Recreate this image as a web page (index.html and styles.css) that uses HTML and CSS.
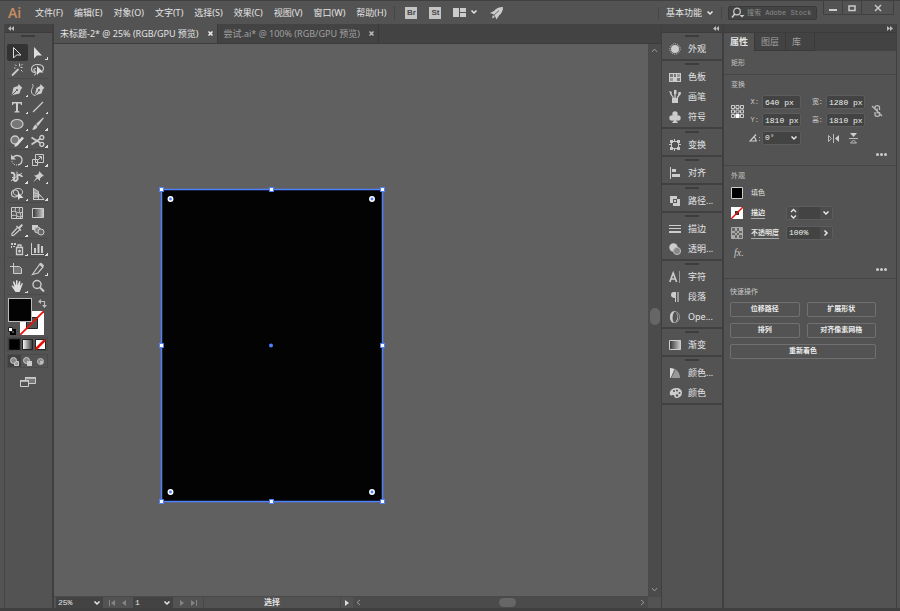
FILE: index.html
```html
<!DOCTYPE html>
<html lang="zh-CN">
<head>
<meta charset="utf-8">
<title>未标题-2</title>
<link rel="stylesheet" href="styles.css">
</head>
<body>
<svg width="0" height="0" class="defs" aria-hidden="true">
  <defs>
    <linearGradient id="grad"><stop offset="0" stop-color="#333"/><stop offset="1" stop-color="#ccc"/></linearGradient>
    <linearGradient id="gradw"><stop offset="0" stop-color="#fff"/><stop offset="1" stop-color="#333"/></linearGradient>
    <symbol id="chev" viewBox="0 0 8 8"><path d="M1.500 2.500 4 5l2.500-2.500" fill="none" stroke="#e8e8e8" stroke-width="1.500"/></symbol>
  </defs>
</svg>

<header class="menubar">
  <span class="logo">Ai</span>
  <nav class="menus">
    <button>文件(F)</button><button>编辑(E)</button><button>对象(O)</button><button>文字(T)</button><button>选择(S)</button><button>效果(C)</button><button>视图(V)</button><button>窗口(W)</button><button>帮助(H)</button>
  </nav>
  <div class="apps">
    <button class="app">Br</button>
    <button class="app">St</button>
    <button class="arrange" aria-label="排列文档"><svg width="13" height="9"><path fill="#ccc" d="M0 0h6v9H0zM7 0h6v4H7zM7 5h6v4H7z"/></svg><svg width="8" height="8"><use href="#chev"/></svg></button>
    <button aria-label="GPU 性能"><svg width="14" height="14" viewBox="0 0 14 14"><path fill="#ccc" d="M13 1C9 1 6 2.500 4 5L0 7l3 1 1.500 1.500L5.500 11l1 2.500L9 9.500C11.500 7.500 13 5 13 1z"/><path fill="#ccc" d="M3 9l2 2-3 1.500z"/><path stroke="#535353" stroke-width=".8" d="M3.500 9.500 9 4.500"/></svg></button>
  </div>
  <button class="workspace">基本功能 <svg width="8" height="8"><use href="#chev"/></svg></button>
  <label class="search"><svg width="14" height="12" viewBox="0 0 14 12"><circle cx="6" cy="4.500" r="3.300" fill="none" stroke="#ccc" stroke-width="1.200"/><path d="M3.700 7 1 10.500" stroke="#ccc" stroke-width="1.500"/><path d="M8.500 8h5L11 10.500z" fill="#ccc"/></svg><input type="text" placeholder="搜索 Adobe Stock" aria-label="搜索 Adobe Stock"></label>
  <div class="winbtns">
    <button aria-label="最小化"><svg width="8" height="8"><path fill="#ccc" d="M0 5h8v2H0z"/></svg></button>
    <button aria-label="最大化"><svg width="8" height="8"><path fill="none" stroke="#ccc" stroke-width="1.500" d="M1 2h6v4.500H1z"/></svg></button>
    <button class="close" aria-label="关闭"><svg width="8" height="8"><path stroke="#ccc" stroke-width="1.400" d="m1 1 6 6m0-6-6 6"/></svg></button>
  </div>
</header>

<main class="work">
  <aside class="tools">
    <div class="collapse left"><svg width="6" height="5"><path fill="#bbb" d="M3 0v5L0 2.500zM6 0v5L3 2.500z"/></svg></div>
    <div class="toolpanel">
      <i class="grip"></i>
      <div class="group">
        <button class="on" aria-label="选择"><svg width="16" height="16"><path fill="none" stroke="#ddd" d="M4.500 2.500v10.500l3-3h4.500z"/></svg></button>
        <button class="fly" aria-label="直接选择"><svg width="16" height="16"><path fill="#ddd" d="M4 2v11.500l3-3h5z"/></svg></button>
        <button aria-label="魔棒"><svg width="16" height="16"><path stroke="#ccc" stroke-width="1.800" d="m3 13.500 6.500-6.500"/><path stroke="#ccc" d="M10.500 1.500v3M13.500 5.500h-2M6 2.500l1.500 1.500M13.500 2l-1.500 1.500M12 8l1.500 1.500M5 6h1.500"/></svg></button>
        <button aria-label="套索"><svg width="16" height="16"><path fill="none" stroke="#ccc" stroke-width="1.200" d="M5 10.500c-3 0-3.500-2-3.500-3.500 0-2.500 2.500-4.500 6-4.500s6 1.500 6 4c0 1.500-.5 2-1 2.500M6 6.500c-2 0-2.500 1-2 2s2 1 2 2-1 2.500-2 2.500"/><path fill="#ddd" d="M7 4v9l2.500-2.500h4z"/></svg></button>
      </div>
      <div class="group wide">
        <button class="fly" aria-label="钢笔"><svg width="16" height="16"><path fill="#ccc" d="m9.500 2 4 4-1.500 1-1.500 4.500L4 13l-1.500.5L3 12l1.500-6.500L9 4z"/><path stroke="#535353" d="m3 13 4.500-4.500"/><circle cx="8" cy="8" r="1" fill="#535353"/></svg></button>
        <button aria-label="曲率"><svg width="16" height="16"><path fill="#ccc" d="m10.500 2 4 4-1.500 1-1.500 4.500L6 13l-1.500.5L5 12l1.500-6L10 4z"/><path stroke="#535353" d="M5 13 9 8.500"/><circle cx="9" cy="8" r="1" fill="#535353"/><path fill="none" stroke="#ccc" d="M2 2c3 2-1 4-.5 8 .3 2 2 3.500 4 3.500"/></svg></button>
        <button class="fly" aria-label="文字"><svg width="16" height="16"><path fill="#ccc" d="M3 3h10v3h-1l-.5-1.500H9V12l1.500.5v1h-5v-1L7 12V4.500H4.500L4 6H3z"/></svg></button>
        <button class="fly" aria-label="直线段"><svg width="16" height="16"><path stroke="#ccc" stroke-width="1.300" d="m3 13 10-10"/></svg></button>
        <button class="fly" aria-label="椭圆"><svg width="16" height="16"><ellipse cx="8" cy="8" rx="6" ry="4.500" fill="#777" stroke="#ccc" stroke-width="1.200"/></svg></button>
        <button class="fly" aria-label="画笔"><svg width="16" height="16"><path fill="#ccc" d="m14 2-6 8-2-2 7-6.500zM5.500 8.500l2 2c-.5 2.500-3 3.500-5.500 3 1.500-1 1-3 3.500-5z"/></svg></button>
        <button class="fly" aria-label="Shaper"><svg width="16" height="16"><circle cx="6" cy="7" r="4" fill="#777" stroke="#ccc" stroke-width="1.300"/><path stroke="#ddd" stroke-width="2.500" d="m7 12.500 7-8"/><path fill="#ddd" d="m5.500 14 .5-3 2 2z"/></svg></button>
        <button class="fly" aria-label="剪刀"><svg width="16" height="16"><path stroke="#ccc" stroke-width="1.700" d="M1.500 4.500l9 5.500M1.500 11.500l9-6"/><circle cx="11.800" cy="4.500" r="2" fill="none" stroke="#ccc" stroke-width="1.300"/><circle cx="11.800" cy="11.300" r="2" fill="none" stroke="#ccc" stroke-width="1.300"/></svg></button>
      </div>
      <div class="group">
        <button class="fly" aria-label="旋转"><svg width="16" height="16"><path fill="none" stroke="#ccc" stroke-width="1.300" d="M4 5.500c3-3.500 9-2 9 2.500 0 3-2 4.500-4 5"/><path fill="#ccc" d="M2 2.500v5h5z"/><path stroke="#ccc" stroke-dasharray="1 1" fill="none" d="M3 9c0 2 2 4 5 4"/></svg></button>
        <button class="fly" aria-label="比例缩放"><svg width="16" height="16"><path fill="none" stroke="#ccc" d="M5.500 2.500h8v8h-8zM2.500 7.500h5v6h-5zM7 9l4-4M8.500 4.500H11.500v3"/></svg></button>
        <button class="fly" aria-label="宽度"><svg width="16" height="16"><path fill="none" stroke="#ccc" stroke-width="2" d="M2 4c4-1 4 3 3 5s1 4 3 2-1-4 1-5 3 2 4.500 1"/><path fill="none" stroke="#ccc" d="m2 12 11-8M8 2.500v4M3 8l4 4"/></svg></button>
        <button class="fly" aria-label="操控变形"><svg width="16" height="16"><path fill="#ccc" d="m9 2 5 5-2 .5-2 2V12L7.500 9.500 3 13.500l3.500-5L4 6.500l3-.5 2-2z"/></svg></button>
        <button class="fly" aria-label="形状生成器"><svg width="16" height="16"><circle cx="6" cy="7.500" r="3.500" fill="none" stroke="#ccc" stroke-width="1.200"/><ellipse cx="9" cy="6" rx="4.500" ry="3.500" fill="none" stroke="#ccc"/><path fill="#ddd" d="M9 6v8l2-2h3.500z"/></svg></button>
        <button class="fly" aria-label="透视网格"><svg width="16" height="16"><path fill="#999" d="M3 2l6 4v6H3z"/><path fill="none" stroke="#ccc" d="M3.500 2v11.500M3.500 2.500l5 3v8M3 6.500l5 1.500M3 10h8M3 13.500h11M9 8l5 5.500"/></svg></button>
      </div>
      <div class="group">
        <button aria-label="网格"><svg width="16" height="16"><path fill="none" stroke="#ccc" d="M2.500 2.500h11v11h-11zM2.500 7c4-3 6 3 11 0M2.500 11c4-3 6 3 11 0M7 2.500c-3 4 3 6 0 11M11 2.500c-3 4 3 6 0 11"/></svg></button>
        <button aria-label="渐变"><svg width="16" height="16"><path fill="url(#grad)" stroke="#ccc" d="M2.500 3.500h11v9h-11z"/></svg></button>
        <button class="fly" aria-label="吸管"><svg width="16" height="16"><path fill="none" stroke="#ccc" stroke-width="1.200" d="m8.500 5.500-5.500 6v2h1.500l6-5.500"/><path fill="#ccc" d="M8 3.500 9.500 5 12 2.500c1-.8 2.500.5 1.500 1.500L11 6.500 12.500 8l-1 1L7 4.500z"/></svg></button>
        <button aria-label="混合"><svg width="16" height="16"><path fill="#ccc" d="M2 3h6v5H2z"/><circle cx="7.500" cy="8" r="3" fill="#888" stroke="#ccc"/><circle cx="11" cy="10" r="3" fill="#666" stroke="#ccc"/></svg></button>
      </div>
      <div class="group">
        <button class="fly" aria-label="符号喷枪"><svg width="16" height="16"><path fill="none" stroke="#ccc" stroke-width="1.300" d="M7.500 6.500h6v7h-6zM9 6V4h3v2"/><circle cx="10.500" cy="10" r="1.500" fill="#ccc"/><path fill="#ccc" d="M2 2h2v2H2zM5 2h2v2H5zM2 5h1v2H2zM4 5h2v1H4z"/></svg></button>
        <button class="fly" aria-label="柱形图"><svg width="16" height="16"><path fill="#ccc" d="M1 2h1v11h12v1H1zM4 7h2v5H4zM7.500 3h2v9h-2zM11 5h2v7h-2z"/></svg></button>
      </div>
      <div class="group wide">
        <button aria-label="画板"><svg width="16" height="16"><path fill="#777" stroke="#ccc" d="M4.500 5.500h6l2 2v5h-8z"/><path stroke="#ccc" d="M4.500 2v4M1 5.500h4"/></svg></button>
        <button class="fly" aria-label="切片"><svg width="16" height="16"><path fill="none" stroke="#ccc" stroke-width="1.200" d="m10 3 3 3-5 6-5.500 1.500L7 7z"/><path fill="#ccc" d="m11 1.500 3 3-1.500 2-3.500-3z"/></svg></button>
        <button class="fly" aria-label="抓手"><svg width="16" height="16"><path fill="#ddd" d="M2.500 8c1-1 2 0 3 1.500L4 4c0-1 1.300-1 1.500 0L7 7.500V3c0-1.200 1.500-1.200 1.500 0v4.500L10 3.500c.3-1 1.600-.7 1.400.3L11 8l1.500-2.500c.7-1 1.500-.3 1.200.5L11.500 12l-1 2H6.500z"/></svg></button>
        <button aria-label="缩放"><svg width="16" height="16"><circle cx="7" cy="6.500" r="4" fill="none" stroke="#ccc" stroke-width="1.400"/><path stroke="#ccc" stroke-width="2" d="m10 9.500 4 4"/></svg></button>
      </div>
      <div class="swatches">
        <button class="strokebox" aria-label="描边"><svg width="24" height="24"><path fill="#fff" d="M0 0h24v24H0z"/><path fill="#535353" stroke="#222" d="M6.500 6.500h11v11h-11z"/><path stroke="#e8140c" stroke-width="1.800" d="M0 24 24 0"/></svg></button>
        <button class="fillbox" aria-label="填色"></button>
        <button class="swap" aria-label="互换填色和描边"><svg width="9" height="9"><path fill="none" stroke="#bbb" stroke-width="1.200" d="M2 2.500h4.500V7"/><path fill="#bbb" d="M3 0v5L0 2.500zM4 6h5L6.500 9z"/></svg></button>
        <button class="reset" aria-label="默认填色和描边"><svg width="8" height="8"><path d="M3 3h4v4H3z" fill="none" stroke="#000" stroke-width="2"/><path fill="#fff" stroke="#222" d="M.5.500h4v4h-4z"/></svg></button>
      </div>
      <div class="triple">
        <button class="on" aria-label="颜色"><svg width="11" height="11"><path stroke="#111" d="M.5.500h10v10H.5z"/></svg></button>
        <button aria-label="渐变"><svg width="11" height="11"><path fill="url(#gradw)" stroke="#222" d="M.5.500h10v10H.5z"/></svg></button>
        <button aria-label="无"><svg width="11" height="11"><path fill="#fff" stroke="#222" d="M.5.500h10v10H.5z"/><path stroke="#e8140c" stroke-width="2.500" d="m1 10 9-9"/></svg></button>
      </div>
      <div class="triple modes">
        <button class="on" aria-label="正常绘图"><svg width="11" height="11"><path fill="#999" stroke="#ccc" d="M5.500 5.500h4v4h-4z"/><circle cx="4.500" cy="4.500" r="3" fill="#888" stroke="#ccc"/></svg></button>
        <button aria-label="背面绘图"><svg width="11" height="11"><circle cx="4.500" cy="4.500" r="3" fill="#888" stroke="#ccc"/><path fill="#ccc" d="M5 5h5v5H5z"/></svg></button>
        <button aria-label="内部绘图"><svg width="11" height="11"><circle cx="5.500" cy="5.500" r="3" fill="#888" stroke="#bbb"/><path fill="#bbb" d="M5 5h3v3H5z"/></svg></button>
      </div>
      <button class="screen" aria-label="更改屏幕模式"><svg width="16" height="12"><path fill="#777" stroke="#ccc" d="M5.500 1.500h10v6h-10z"/><path fill="#555" stroke="#ccc" d="M.5 4.500h8v6h-8z"/><path stroke="#ccc" stroke-width="1.500" d="M0 5h9M5 2h11"/></svg></button>
    </div>
  </aside>

  <section class="document">
    <div class="tabs">
      <div class="tab current"><span>未标题-2* @ 25% (RGB/GPU 预览)</span><button aria-label="关闭标签"><svg width="5" height="5"><path stroke="#eee" stroke-width="1.500" d="m.5.5 4 4m0-4-4 4"/></svg></button></div>
      <div class="tab"><span>尝试.ai* @ 100% (RGB/GPU 预览)</span><button aria-label="关闭标签"><svg width="5" height="5"><path stroke="#bbb" stroke-width="1.500" d="m.5.5 4 4m0-4-4 4"/></svg></button></div>
    </div>
    <div class="view">
      <div class="canvas">
        <svg class="art" width="226" height="317" viewBox="-2 -2 226 317">
          <path fill="#030303" stroke="#4f80ff" stroke-width="1.500" d="M.5.500h221v312H.5z"/>
          <g fill="#fff" stroke="#4f80ff"><path d="M-1.500-1.500h4v4h-4zM108.500-1.500h4v4h-4zM219.500-1.500h4v4h-4zM-1.500 154.500h4v4h-4zM219.500 154.500h4v4h-4zM-1.500 310.500h4v4h-4zM108.500 310.500h4v4h-4zM219.500 310.500h4v4h-4z"/></g>
          <g fill="#4f80ff" stroke="#fff" stroke-width="1.500"><circle cx="9.500" cy="10" r="2.200"/><circle cx="211" cy="10" r="2.200"/><circle cx="9.500" cy="303" r="2.200"/><circle cx="211" cy="303" r="2.200"/></g>
          <circle cx="110" cy="156.500" r="2" fill="#4f80ff"/>
        </svg>
      </div>
      <div class="vscroll"><svg width="7" height="5"><path fill="none" stroke="#999" d="M1 4l2.500-3L6 4"/></svg><i></i><svg width="7" height="5"><path fill="none" stroke="#999" d="M1 1l2.500 3L6 1"/></svg></div>
    </div>
    <footer class="status">
      <span class="drop zoom"><select aria-label="缩放比例"><option>25%</option></select><svg width="8" height="8"><use href="#chev"/></svg></span>
      <span class="nav"><svg width="8" height="8"><path fill="#858585" d="M1 1h1v6H1zM7 1v6L3 4z"/></svg><svg width="8" height="8"><path fill="#858585" d="M6 1v6L2 4z"/></svg></span>
      <span class="drop page"><select aria-label="画板导航"><option>1</option></select><svg width="8" height="8"><use href="#chev"/></svg></span>
      <span class="nav"><svg width="8" height="8"><path fill="#858585" d="M2 1v6l4-3z"/></svg><svg width="8" height="8"><path fill="#858585" d="M6 1h1v6H6zM1 1v6l4-3z"/></svg></span>
      <span class="current-tool">选择</span>
      <button class="play" aria-label="显示"><svg width="8" height="8"><path fill="#ddd" d="M2 1v6l4-3z"/></svg></button>
      <div class="hscroll"><svg width="5" height="7"><path fill="none" stroke="#999" d="M4 1 1 3.500 4 6"/></svg><i></i><svg width="5" height="7"><path fill="none" stroke="#999" d="m1 1 3 2.500L1 6"/></svg></div>
      <span class="corner"></span>
    </footer>
  </section>

  <aside class="dock">
    <div class="collapse right"><svg width="6" height="5"><path fill="#bbb" d="M3 0v5L0 2.500zM6 0v5L3 2.500z"/></svg></div>
    <div class="dockpanel">
      <div class="dgroup"><button><svg width="12" height="12"><circle cx="6" cy="6" r="5.200" fill="none" stroke="#ccc" stroke-dasharray="1 1"/><circle cx="6" cy="6" r="4" fill="#ccc"/></svg><span>外观</span></button></div>
      <div class="dgroup">
        <button><svg width="12" height="12"><path fill="#ccc" d="M0 2h12v9H0z"/><path fill="#777" d="M1 3h3v3H1zM5 3h2v3H5zM8 7h3v3H8z"/><path fill="#999" d="M8 3h3v3H8zM1 7h3v3H1z"/></svg><span>色板</span></button>
        <button><svg width="12" height="14"><path fill="#ccc" d="M3 8h6v5H3z"/><path stroke="#ccc" stroke-width="1.300" d="M4.500 8 1.500 3.500M6 8V4M8 8l2.500-3.500"/><path fill="#ccc" d="M0 1l3 1-1 3zM5 0h2.500v4H5zM9 5l.5-3H12l-.5 3z"/></svg><span>画笔</span></button>
        <button><svg width="12" height="12"><circle cx="6" cy="3" r="2.700" fill="#ccc"/><circle cx="3" cy="7" r="2.700" fill="#ccc"/><circle cx="9" cy="7" r="2.700" fill="#ccc"/><path fill="#ccc" d="M5 4h2l.5 6L9 12H3l1.500-2z"/></svg><span>符号</span></button>
      </div>
      <div class="dgroup"><button><svg width="12" height="12"><path fill="none" stroke="#ccc" d="M2.500 2.500h7v7h-7z"/><path fill="#ccc" d="M1 1h3v3H1zM8 1h3v3H8zM1 8h3v3H1zM8 8h3v3H8zM5 0h1v2H5zM5 10h1v2H5zM0 5h2v1H0zM10 5h2v1h-2z"/></svg><span>变换</span></button></div>
      <div class="dgroup"><button><svg width="12" height="12"><path fill="#ccc" d="M1 0h1v12H1zM3 2h4v3H3zM3 7h8v3H3z"/></svg><span>对齐</span></button></div>
      <div class="dgroup"><button><svg width="12" height="12"><path fill="#ccc" d="M1 1h7v3h3v7H4V8H1z"/><path fill="#555" d="M4 4h4v4H4z"/><path fill="#ccc" d="M5 5h2v2H5z"/></svg><span>路径...</span></button></div>
      <div class="dgroup">
        <button><svg width="12" height="12"><path fill="#ccc" d="M0 2h12v1H0zM0 5h12v1H0zM0 8h12v2H0z"/></svg><span>描边</span></button>
        <button><svg width="12" height="12"><circle cx="4.500" cy="4.500" r="4.200" fill="#ccc"/><circle cx="8" cy="8" r="3.600" fill="#888" stroke="#bbb"/></svg><span>透明...</span></button>
      </div>
      <div class="dgroup">
        <button><svg width="12" height="12"><path fill="none" stroke="#ccc" stroke-width="1.600" d="M.8 11 4.200 2l3.400 9M2 8h4.500"/><path fill="#999" d="M10 0h1v12h-1z"/></svg><span>字符</span></button>
        <button><svg width="12" height="12"><path fill="#ccc" d="M4.500 1H7v10H6V7C3.500 7 2 6 2 4s1-3 2.500-3z"/><path fill="#999" d="M8 1h2v10H8z"/></svg><span>段落</span></button>
        <button><svg width="12" height="14"><ellipse cx="6" cy="7" rx="4.500" ry="5.500" fill="none" stroke="#999"/><path fill="#ccc" d="M6 1C2.500 1 1 4 1 7s1.500 6 4 6C3 10 3 4 6 1zM7 2.500c2 3 2 6-.5 9.500C10 12 9.500 3 7 2.500z"/></svg><span>Ope...</span></button>
      </div>
      <div class="dgroup"><button><svg width="12" height="12"><path fill="url(#grad)" stroke="#ccc" d="M.5 1.500h11v9H.5z"/></svg><span>渐变</span></button></div>
      <div class="dgroup">
        <button><svg width="12" height="12"><path fill="#999" d="M1 1c6 0 10 4 10 10H1z"/><path fill="#ddd" d="M1 1l4 1-3 9H1z"/><path stroke="#666" d="m2 11 4-8"/></svg><span>颜色...</span></button>
        <button><svg width="14" height="12"><path fill="#ccc" d="M7 1c4 0 6 2 6 5s-3 5-6 5c-2 0-1-3-3-3-1 0-1.500 1-3 0C0 4 3 1 7 1z"/><g fill="#535353"><circle cx="5" cy="4" r="1"/><circle cx="8" cy="3.500" r="1"/><circle cx="10.500" cy="6" r="1"/><circle cx="8" cy="8.500" r="1.200"/></g></svg><span>颜色</span></button>
      </div>
    </div>
  </aside>

  <aside class="props">
    <div class="collapse right"><svg width="6" height="5"><path fill="#bbb" d="M0 0v5l3-2.500zM3 0v5l3-2.500z"/></svg></div>
    <div class="ptabs"><button class="current">属性</button><button>图层</button><button>库</button></div>
    <section class="kind"><h2>矩形</h2></section>
    <section>
      <h2>变换</h2>
      <div class="transform">
        <svg class="ref" width="13" height="13"><path stroke="#bbb" d="M2 2.500h9M2 6.500h9M2 10.500h9" stroke-width=".6"/><g fill="#535353" stroke="#ccc"><path d="M.5.500h3v3h-3zM5 .5h3v3H5zM9.500.500h3v3h-3zM.5 5h3v3h-3zM5 5h3v3H5zM9.500 5h3v3h-3zM.5 9.500h3v3h-3zM9.500 9.500h3v3h-3z"/></g><path fill="#fff" d="M4.500 9h4v4h-4z"/></svg>
        <label for="fx">X:</label><input id="fx" value="640 px">
        <label for="fw">宽：</label><input id="fw" value="1280 px">
        <button class="link" aria-label="约束宽度和高度比例"><svg width="12" height="14"><path fill="none" stroke="#bbb" stroke-width="1.300" d="M4 6V3.500C4 1 8.500 1 8.500 3.500V6M4 8v2.500c0 2.500 4.500 2.500 4.500 0V8M6.200 4.500v5M1 2l10 10"/></svg></button>
        <label for="fy">Y:</label><input id="fy" value="1810 px">
        <label for="fh">高：</label><input id="fh" value="1810 px">
        <label class="angle" for="fa" aria-label="旋转"><svg width="12" height="8"><path fill="none" stroke="#ccc" stroke-width="1.200" d="M7 .5 1 7h7M5 3c1.500 1 2 2.500 2 4"/><path fill="#aaa" d="M10 3h1v1h-1zM10 6h1v1h-1z"/></svg></label>
        <span class="drop rot"><select id="fa"><option>0°</option></select><svg width="8" height="8"><use href="#chev"/></svg></span>
        <span class="flips">
          <button aria-label="水平翻转"><svg width="11" height="9"><path fill="#ccc" d="M11 1v7L7 4.500z"/><path fill="none" stroke="#bbb" d="M.5 1.500v6l3-3zM5.500 0v9"/></svg></button>
          <button aria-label="垂直翻转"><svg width="9" height="11"><path fill="#ccc" d="M1 0h7L4.500 4z"/><path fill="none" stroke="#bbb" d="M1.500 10h6l-3-3zM0 5.500h9"/></svg></button>
        </span>
      </div>
      <button class="more" aria-label="更多选项"><i></i><i></i><i></i></button>
    </section>
    <section>
      <h2>外观</h2>
      <div class="look"><button class="sw" aria-label="填色"><svg width="12" height="12"><path stroke="#ccc" d="M.5.500h11v11H.5z"/></svg></button><span>填色</span></div>
      <div class="look"><button class="sw" aria-label="描边颜色"><svg width="12" height="12"><path fill="#fff" d="M0 0h12v12H0z"/><path fill="#333" d="M4 4h4v4H4z"/><path stroke="#e8140c" stroke-width="1.500" d="M0 12 12 0"/></svg></button><a href="#">描边</a>
        <span class="field weight"><button aria-label="调整粗细"><svg width="7" height="11"><path fill="none" stroke="#e8e8e8" stroke-width="1.300" d="m1 4 2.500-2.500L6 4M1 7.500 3.500 10 6 7.500"/></svg></button><input aria-label="描边粗细"><button aria-label="粗细预设"><svg width="8" height="8"><use href="#chev"/></svg></button></span></div>
      <div class="look"><button class="sw" aria-label="不透明度蒙版"><svg width="12" height="12"><path fill="#666" stroke="#aaa" d="M.5.500h11v11H.5z"/><path fill="#aaa" d="M4 1h2v3H4zM8 1h3v3H8zM1 4h3v2H1zM6 4h2v2H6zM4 6h2v2H4zM8 6h3v2H8zM1 8h3v3H1zM6 8h2v3H6z"/></svg></button><a href="#">不透明度</a>
        <span class="field opac"><input aria-label="不透明度" value="100%"><button aria-label="调整不透明度"><svg width="8" height="8"><path fill="none" stroke="#e8e8e8" stroke-width="1.500" d="M2.500 1.500 5 4 2.500 6.500"/></svg></button></span></div>
      <button class="fx" aria-label="效果">fx.</button>
      <button class="more" aria-label="更多选项"><i></i><i></i><i></i></button>
    </section>
    <section class="quick">
      <h2>快速操作</h2>
      <div class="actions"><button>位移路径</button><button>扩展形状</button><button>排列</button><button>对齐像素网格</button><button class="full">重新着色</button></div>
    </section>
  </aside>
</main>
</body>
</html>
```
FILE: styles.css
```css
* { box-sizing: border-box; }
body {
  margin: 0;
  height: 100vh;
  display: flex;
  flex-direction: column;
  overflow: hidden;
  background: #535353;
  border-top: 1px solid #404040;
  color: #e4e4e4;
  font: 9px/12px "Noto Sans", "Noto Sans CJK SC", sans-serif;
}
button, input, select {
  margin: 0;
  padding: 0;
  border: 0;
  background: none;
  color: inherit;
  font: inherit;
  border-radius: 0;
}
svg { display: block; flex: none; }
i { display: block; }
.defs { position: absolute; }

/* Menu bar */
.menubar {
  flex: none;
  height: 23px;
  display: flex;
  align-items: center;
  padding-right: 6px;
  white-space: nowrap;
}
.logo {
  width: 35px;
  padding-left: 8px;
  color: #c98d62;
  font: 600 14px/20px "Open Sans", sans-serif;
}
.menus { display: flex; gap: 11px; }
.apps {
  display: flex;
  align-items: center;
  gap: 12px;
  margin-left: 8px;
  padding-left: 10px;
  border-left: 1px solid #454545;
}
.app {
  width: 12px;
  height: 12px;
  background: #c4c4c4;
  color: #484848;
  font: bold 8px/12px "Liberation Sans", sans-serif;
}
.arrange { display: flex; gap: 4px; }
.workspace {
  display: flex;
  align-items: center;
  gap: 4px;
  margin-left: auto;
  padding: 0 7px;
  border-left: 1px solid #454545;
  border-right: 1px solid #454545;
}
.search {
  width: 89px;
  height: 14px;
  display: flex;
  align-items: center;
  margin: 0 6px;
  padding-left: 2px;
  background: #434343;
  border: 1px solid #3a3a3a;
  border-radius: 2px;
}
.search input {
  width: 100%;
  min-width: 0;
  padding-left: 2px;
  font: 7px/12px "Liberation Mono", "Noto Sans CJK SC", monospace;
}
.search input::placeholder { color: #8c8c8c; opacity: 1; }
.winbtns {
  align-self: flex-start;
  display: flex;
  border: 1px solid #404040;
  border-top: 0;
}
.winbtns button {
  width: 19px;
  height: 13px;
  display: grid;
  place-items: center;
  border-right: 1px solid #404040;
}
.winbtns .close { width: 31px; border: 0; }

/* Main row */
.work {
  flex: 1;
  min-height: 0;
  display: flex;
  padding: 0 3px 0 4px;
  border-bottom: 3px solid #404040;
}
.collapse {
  flex: none;
  height: 9px;
  display: flex;
  align-items: center;
  padding: 0 3px;
  background: #434343;
  border-bottom: 1px solid #3c3c3c;
}
.collapse.right { justify-content: flex-end; }

/* Tools */
.tools {
  flex: none;
  width: 50px;
  display: flex;
  flex-direction: column;
  border-right: 2px solid #3f3f3f;
  border-left: 1px solid #454545;
}
.toolpanel { flex: 1; padding: 2px 4px 0 2px; }
.grip {
  width: 14px;
  height: 2px;
  margin: 0 auto 7px;
  background: #3d3d3d;
}
.group {
  display: grid;
  grid-template-columns: 1fr 1fr;
  grid-auto-rows: 17px;
}
.group + .group { border-top: 1px solid #4a4a4a; padding-top: 1px; }
.group + .group.wide { padding-top: 2px; }
.group button {
  position: relative;
  display: grid;
  place-items: center;
}
.group .on { background: #333; border-radius: 2px; }
.fly::after {
  content: "";
  position: absolute;
  right: 0;
  bottom: 1px;
  width: 3px;
  height: 3px;
  background: linear-gradient(135deg, transparent 50%, #ddd 50%);
}
.swatches {
  position: relative;
  height: 43px;
  border-top: 1px solid #4a4a4a;
}
.swatches button { position: absolute; }
.fillbox {
  left: 1px;
  top: 3px;
  width: 24px;
  height: 24px;
  background: #030303;
  border: 1px solid #bbb;
}
.strokebox { left: 13px; top: 16px; }
.swap { right: 1px; top: 4px; }
.reset { left: 1px; top: 32px; }
.triple {
  display: grid;
  grid-template-columns: repeat(3, 1fr);
  height: 14px;
  margin-bottom: 3px;
  border: 1px solid #4a4a4a;
}
.triple button { display: grid; place-items: center; }
.triple .on { background: #404040; }
.screen { display: block; margin: 8px auto 0; }

/* Document */
.document {
  flex: 1;
  min-width: 0;
  display: flex;
  flex-direction: column;
}
.tabs { display: flex; height: 20px; background: #434343; border-bottom: 1px solid #3c3c3c; }
.tab {
  display: flex;
  align-items: center;
  gap: 9px;
  padding: 0 4px 0 6px;
  border-right: 1px solid #3a3a3a;
  color: #a0a0a0;
  white-space: nowrap;
}
.tab.current { background: #535353; color: #e4e4e4; }
.view { flex: 1; min-height: 0; display: flex; }
.canvas { flex: 1; position: relative; background: #606060; overflow: hidden; }
.art { position: absolute; left: 105px; top: 143px; }
.vscroll {
  width: 13px;
  display: flex;
  flex-direction: column;
  align-items: center;
  justify-content: space-between;
  padding: 4px 0;
  background: #4b4b4b;
}
.vscroll i { width: 10px; height: 17px; margin-bottom: 8px; border-radius: 5px; background: #666; }
.status {
  height: 12px;
  display: flex;
  border-top: 1px solid #4a4a4a;
  font: 8px/11px "Liberation Mono", "Noto Sans CJK SC", monospace;
}
.drop {
  display: grid;
  grid-template-columns: 1fr 12px;
  align-items: center;
  background: #434343;
}
.drop select {
  grid-area: 1 / 1 / 2 / 3;
  width: 100%;
  padding-left: 2px;
  appearance: none;
}
.drop svg { grid-area: 1 / 2; justify-self: center; pointer-events: none; }
.zoom { width: 47px; margin-left: 2px; }
.page { width: 40px; }
.nav { width: 30px; display: flex; align-items: center; justify-content: space-evenly; }
.current-tool {
  width: 138px;
  border: solid #484848;
  border-width: 0 1px;
  text-align: center;
  font-weight: bold;
}
.play { width: 12px; display: grid; place-items: center; }
.hscroll {
  flex: 1;
  display: flex;
  align-items: center;
  justify-content: space-between;
  padding: 0 3px;
  background: #4b4b4b;
}
.hscroll i { width: 17px; height: 9px; margin-left: 14px; border-radius: 5px; background: #666; }
.corner { width: 13px; }

/* Panel dock */
.dock {
  flex: none;
  width: 63px;
  display: flex;
  flex-direction: column;
  border: solid #3f3f3f;
  border-width: 0 2px 0 1px;
}
.dgroup { padding-top: 6px; border-bottom: 2px solid #404040; }
.dgroup::before {
  content: "";
  display: block;
  width: 14px;
  height: 2px;
  margin: -4px auto 2px;
  background: #3d3d3d;
}
.dgroup button {
  width: 100%;
  height: 20px;
  display: flex;
  align-items: center;
  padding-left: 7px;
  white-space: nowrap;
}
.dgroup svg { margin-right: auto; }
.dgroup span { width: 34px; text-align: left; }

/* Properties */
.props {
  flex: none;
  width: 173px;
  display: flex;
  flex-direction: column;
  border-right: 1px solid #404040;
  font: 7px/10px "Liberation Mono", "Noto Sans CJK SC", monospace;
}
.ptabs { display: flex; height: 18px; background: #434343; font: 9px/12px "Noto Sans CJK SC", sans-serif; }
.ptabs button { padding: 0 6px; border: solid #3a3a3a; border-width: 0 1px 1px 0; color: #a0a0a0; }
.ptabs .current { background: #535353; border-bottom: 0; color: #e4e4e4; font-weight: bold; }
.ptabs button:last-child { padding-right: 13px; }
.props section { padding: 5px 7px; border-bottom: 1px solid #454545; }
.props .kind { padding: 7px 7px 6px; }
.props h2 { margin: 0; font: inherit; color: #c8c8c8; }
.props .quick { padding: 8px 20px 0 6px; border: 0; }
.transform {
  display: grid;
  grid-template-columns: 18px 13px 39px 25px 39px 1fr;
  grid-auto-rows: 14px;
  row-gap: 4px;
  align-items: center;
  margin-top: 5px;
}
.transform label { padding-right: 3px; text-align: right; white-space: nowrap; color: #c8c8c8; }
.transform label[for="fw"], .transform label[for="fh"] { padding: 0; }
.transform input, .field, .rot {
  width: 100%;
  height: 14px;
  background: #434343;
  border: 1px solid #5c5c5c;
  border-radius: 2px;
  color: #f0f0f0;
  font-size: 8px;
}
.transform input { padding-left: 2px; }
.ref { grid-row: 1 / 3; align-self: center; }
.link { grid-area: 1 / 6 / 3 / 7; justify-self: center; }
.transform .angle { grid-column: 1 / 3; justify-self: end; padding-right: 1px; }
.flips { grid-column: 4 / 7; display: flex; gap: 10px; align-items: center; padding-left: 27px; }
.flips button { display: block; }
.more {
  display: flex;
  gap: 1px;
  margin: 8px 2px 4px auto;
}
.more i { width: 3px; height: 3px; border-radius: 2px; background: #ccc; }
.look {
  display: grid;
  grid-template-columns: 20px 35px 47px;
  align-items: center;
  height: 20px;
}
h2 + .look { margin-top: 2px; }
.look span { white-space: nowrap; }
.look a {
  justify-self: start;
  color: #e4e4e4;
  font-weight: bold;
  text-decoration: none;
  white-space: nowrap;
  border-bottom: 1px solid #aaa;
}
.sw { justify-self: start; }
.field { display: grid; }
.field input { width: 100%; min-width: 0; padding-left: 2px; }
.field button { display: grid; place-items: center; background: #4c4c4c; }
.weight { grid-template-columns: 12px 1fr 12px; }
.opac { grid-template-columns: 1fr 12px; }
.fx { display: block; padding-left: 3px; color: #c8c8c8; font: italic 10px/20px "Liberation Serif", serif; }
.fx + .more { margin-top: 5px; margin-bottom: 2px; }
.actions { display: grid; grid-template-columns: 1fr 1fr; gap: 6px 7px; margin-top: 5px; }
.actions button {
  height: 15px;
  border: 1px solid #707070;
  border-radius: 2px;
  color: #ececec;
  font-weight: bold;
  line-height: 13px;
}
.actions .full { grid-column: 1 / 3; }
```
